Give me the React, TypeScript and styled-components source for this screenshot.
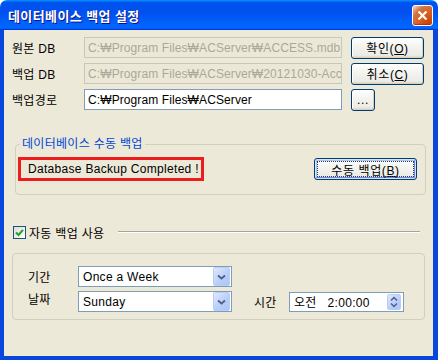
import React from "react";
import styled, { createGlobalStyle, css } from "styled-components";

const FONT = `"Liberation Sans", "Noto Sans CJK KR", sans-serif`;

const GlobalStyle = createGlobalStyle`
  html, body {
    margin: 0;
    padding: 0;
    background: #ffffff;
  }
  body {
    font-family: ${FONT};
    font-size: 12px;
    letter-spacing: 0.3px;
    color: #000;
  }
  #root {
    width: 438px;
    height: 360px;
  }
`;

const Frame = styled.div`
  width: 438px;
  height: 360px;
  display: flex;
  flex-direction: column;
  border-radius: 7px 7px 0 0;
  overflow: hidden;
`;

const TitleBar = styled.div`
  height: 30px;
  flex: none;
  display: flex;
  align-items: center;
  justify-content: space-between;
  padding: 0 5px 0 8px;
  background: linear-gradient(
    180deg,
    #0997ff,
    #0053ee 8%,
    #0050ee 40%,
    #0066ff 88%,
    #0066ff 93%,
    #005bff 95%,
    #003dd7 96%,
    #003dd7
  );
`;

const Title = styled.span`
  color: #fff;
  font-weight: bold;
  font-size: 13px;
  letter-spacing: 0.4px;
  text-shadow: 1px 1px #0f1089;
`;

const CloseButton = styled.button`
  width: 21px;
  height: 21px;
  padding: 0;
  display: flex;
  align-items: center;
  justify-content: center;
  border: 1px solid #fff;
  border-radius: 3px;
  background: radial-gradient(
    circle at 85% 85%,
    #cc4600 0%,
    #dc6527 55%,
    #cd7546 70%,
    #ffccb2 95%
  );
  box-shadow: inset 0 -1px 1px #b0301a;
`;

const Body = styled.div`
  flex: 1;
  display: flex;
  flex-direction: column;
  background: #ece9d8;
  border: solid #0846dc;
  border-width: 0 5px 4px 4px;
  padding: 7px 9px 0 8px;
`;

const PathGrid = styled.div`
  display: grid;
  grid-template-columns: 63px 258px 73px;
  grid-auto-rows: 21px;
  column-gap: 9px;
  row-gap: 5px;
  align-items: center;
`;

const Label = styled.span<{ $lift?: number }>`
  white-space: nowrap;
  transform: translateY(${(p) => -(p.$lift ?? 0)}px);
`;

const Field = styled.div<{ $disabled?: boolean }>`
  box-sizing: border-box;
  height: 21px;
  display: flex;
  align-items: center;
  padding: 0 3px;
  overflow: hidden;
  white-space: nowrap;
  letter-spacing: 0.1px;
  border: 1px solid ${(p) => (p.$disabled ? "#c9c7ba" : "#7f9db9")};
  background: ${(p) => (p.$disabled ? "#ebe8d7" : "#fff")};
  color: ${(p) => (p.$disabled ? "#aca899" : "#000")};
`;

const Button = styled.button<{ $default?: boolean; $width?: number }>`
  box-sizing: border-box;
  width: ${(p) => p.$width ?? 73}px;
  height: 22px;
  padding: 0;
  font-family: ${FONT};
  font-size: 12px;
  letter-spacing: 0.6px;
  color: #000;
  border: 1px solid #003c74;
  border-radius: 3px;
  background: linear-gradient(
    180deg,
    #ffffff 0%,
    #f4f4f0 40%,
    #ecebe6 86%,
    #d6d0c5 100%
  );
  box-shadow: inset -1px -1px #d8d2bd, inset 1px 1px #fff;
  ${(p) =>
    p.$default &&
    css`
      box-shadow: inset 0 0 0 1px #cee7ff, inset -2px -2px #6982ee,
        inset 2px 2px #a9c4f5;
      outline: 1px dotted #3a3a3a;
      outline-offset: -4px;
    `}
  u {
    text-decoration: underline;
  }
`;

const GroupBox = styled.fieldset<{ $titled?: boolean }>`
  margin: ${(p) => (p.$titled ? "27px -2px 0 3px" : "13px -1px 0 0")};
  padding: 0;
  min-width: 0;
  border: 1px solid #d0d0bf;
  border-radius: 4px;
`;

const Legend = styled.legend`
  margin-left: 4px;
  padding: 0 2px;
  line-height: 14px;
  color: #0046d5;
`;

const ManualRow = styled.div`
  display: flex;
  align-items: center;
  justify-content: space-between;
  padding: 6px 8px 13px 2px;
`;

const StatusBox = styled.div`
  box-sizing: border-box;
  width: 186px;
  height: 24px;
  display: flex;
  align-items: center;
  padding-left: 7px;
  border: 3px solid #ee1c1c;
  background: #ece9d8;
`;

const CheckRow = styled.div`
  height: 16px;
  margin-top: 29px;
  display: flex;
  align-items: center;
`;

const CheckBox = styled.span`
  box-sizing: border-box;
  width: 13px;
  height: 13px;
  margin-left: 1px;
  display: flex;
  align-items: center;
  justify-content: center;
  border: 1px solid #1c5180;
  background: linear-gradient(135deg, #dcdcd7, #fff);
`;

const CheckLabel = styled.span`
  margin-left: 3px;
  white-space: nowrap;
`;

const Rule = styled.div`
  flex: 1;
  margin: 0 4px 0 14px;
  border-top: 1px solid #a7a696;
  border-bottom: 1px solid #fff;
`;

const ScheduleGrid = styled.div`
  display: grid;
  grid-template-columns: 50px 154px 57px 115px;
  grid-auto-rows: 21px;
  row-gap: 4px;
  align-items: center;
  padding: 12px 0 7px 15px;
`;

const TimeLabel = styled(Label)`
  padding-left: 22px;
`;

const Combo = styled.div`
  box-sizing: border-box;
  height: 21px;
  display: flex;
  align-items: center;
  border: 1px solid #7f9db9;
  background: #fff;
`;

const ComboText = styled.span`
  flex: 1;
  padding-left: 4px;
`;

const DropButton = styled.span<{ $w: number; $h: number }>`
  box-sizing: border-box;
  width: ${(p) => p.$w}px;
  height: ${(p) => p.$h}px;
  margin-right: 1px;
  display: flex;
  align-items: center;
  justify-content: center;
  border: 1px solid #b9cdf6;
  border-radius: 2px;
  background: linear-gradient(135deg, #e0e9fd, #b7cdf8 60%, #aec7f6);
`;

const TimePicker = styled(Combo)`
  height: 20px;
  padding-right: 1px;
`;

const TimeText = styled.span`
  flex: 1;
  padding-left: 4px;
  white-space: pre;
`;

const Chevron = () => (
  <svg width="9" height="6" viewBox="0 0 9 6">
    <path d="M1 1.5 L4.5 4.5 L8 1.5" fill="none" stroke="#4d6185" strokeWidth="1.8" />
  </svg>
);

const SpinArrows = () => (
  <svg width="8" height="12" viewBox="0 0 8 12">
    <path d="M1 4.5 L4 1.5 L7 4.5" fill="none" stroke="#4d6185" strokeWidth="1.5" />
    <path d="M1 7.5 L4 10.5 L7 7.5" fill="none" stroke="#4d6185" strokeWidth="1.5" />
  </svg>
);

const App = () => {
  return (
    <>
      <GlobalStyle />
      <Frame>
        <TitleBar>
          <Title>데이터베이스 백업 설정</Title>
          <CloseButton aria-label="닫기">
            <svg width="11" height="11" viewBox="0 0 11 11">
              <path d="M1.5 1.5 L9.5 9.5 M9.5 1.5 L1.5 9.5" stroke="#fff" strokeWidth="2.2" />
            </svg>
          </CloseButton>
        </TitleBar>

        <Body>
          <PathGrid>
            <Label>원본 DB</Label>
            <Field $disabled>C:₩Program Files₩ACServer₩ACCESS.mdb</Field>
            <Button>
              확인(<u>O</u>)
            </Button>

            <Label>백업 DB</Label>
            <Field $disabled>C:₩Program Files₩ACServer₩20121030-Access.mdb</Field>
            <Button>
              취소(<u>C</u>)
            </Button>

            <Label>백업경로</Label>
            <Field>C:₩Program Files₩ACServer</Field>
            <Button $width={24}>...</Button>
          </PathGrid>

          <GroupBox $titled>
            <Legend>데이터베이스 수동 백업</Legend>
            <ManualRow>
              <StatusBox>Database Backup Completed !</StatusBox>
              <Button $default $width={103}>
                수동 백업(<u>B</u>)
              </Button>
            </ManualRow>
          </GroupBox>

          <CheckRow>
            <CheckBox>
              <svg width="9" height="9" viewBox="0 0 9 9">
                <path d="M1 4.5 L3.5 7 L8 1.8" fill="none" stroke="#21a121" strokeWidth="2" />
              </svg>
            </CheckBox>
            <CheckLabel>자동 백업 사용</CheckLabel>
            <Rule />
          </CheckRow>

          <GroupBox>
            <ScheduleGrid>
              <Label>기간</Label>
              <Combo>
                <ComboText>Once a Week</ComboText>
                <DropButton $w={17} $h={19}>
                  <Chevron />
                </DropButton>
              </Combo>
              <span />
              <span />

              <Label $lift={3}>날짜</Label>
              <Combo>
                <ComboText>Sunday</ComboText>
                <DropButton $w={17} $h={19}>
                  <Chevron />
                </DropButton>
              </Combo>
              <TimeLabel>시간</TimeLabel>
              <TimePicker>
                <TimeText>{"오전   2:00:00"}</TimeText>
                <DropButton $w={14} $h={16}>
                  <SpinArrows />
                </DropButton>
              </TimePicker>
            </ScheduleGrid>
          </GroupBox>
        </Body>
      </Frame>
    </>
  );
};

export default App;
